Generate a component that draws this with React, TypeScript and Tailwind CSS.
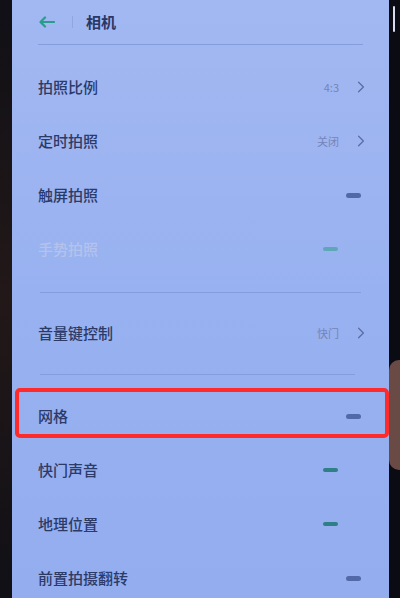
const FONT = { fontFamily: '"Noto Sans CJK SC", "Noto Sans", sans-serif' }

type Row = {
  label: string
  value?: string
  toggle?: 'off' | 'on'
  faded?: boolean
}

const GROUP_A: Row[] = [
  { label: '拍照比例', value: '4:3' },
  { label: '定时拍照', value: '关闭' },
  { label: '触屏拍照', toggle: 'off' },
  { label: '手势拍照', toggle: 'on', faded: true },
]

const GROUP_C: Row[] = [
  { label: '网格', toggle: 'off' },
  { label: '快门声音', toggle: 'on' },
  { label: '地理位置', toggle: 'on' },
  { label: '前置拍摄翻转', toggle: 'off' },
]

function Chevron() {
  return (
    <svg viewBox="0 0 10 16" className="w-[8px] h-[14px]" fill="none" stroke="#5b6da6" strokeWidth="1.6" strokeLinecap="round" strokeLinejoin="round">
      <path d="M2 2l6 6-6 6" />
    </svg>
  )
}

function Toggle({ state, faded }: { state: 'off' | 'on'; faded?: boolean }) {
  if (state === 'on') {
    return (
      <div className="w-[42px] flex justify-start">
        <div className={`w-[15px] h-[4px] rounded-full ${faded ? 'bg-[#5fa7b8]' : 'bg-[#2f7f86]'}`} />
      </div>
    )
  }
  return (
    <div className="w-[42px] flex justify-end pr-[4px]">
      <div className="w-[15px] h-[5px] rounded-full bg-[#5269a8]" />
    </div>
  )
}

function SettingRow({ row }: { row: Row }) {
  return (
    <div className="h-[54px] flex items-center justify-between pl-[26px] pr-[24px]">
      <span className={`text-[15px] font-medium ${row.faded ? 'text-[#b4c2ec]' : 'text-[#2c3a68]'}`}>{row.label}</span>
      {row.value && (
        <div className="flex items-center gap-[18px]">
          <span className="text-[11px] text-[#7485b8]">{row.value}</span>
          <Chevron />
        </div>
      )}
      {row.toggle && <Toggle state={row.toggle} faded={row.faded} />}
    </div>
  )
}

export default function App() {
  return (
    <div className="w-[400px] h-[598px] overflow-hidden flex bg-[#0e0e16]" style={FONT}>
      {/* left bezel */}
      <div className="w-[12px] h-full bg-gradient-to-b from-[#101016] via-[#221818] to-[#101016]" />

      {/* screen */}
      <div className="relative flex-1 h-full bg-gradient-to-b from-[#a2b8f2] via-[#98b1f0] to-[#93adef] overflow-hidden">
        <div className="h-[44px] flex items-center pl-[27px]">
          <svg viewBox="0 0 16 12" className="w-[16px] h-[12px]" fill="none" stroke="#2b9b8c" strokeWidth="2.2" strokeLinecap="round" strokeLinejoin="round">
            <path d="M15 6H2M6 1.5L1.5 6 6 10.5" />
          </svg>
          <div className="ml-[17px] w-px h-[12px] bg-[#8ea6e2]" />
          <span className="ml-[13px] text-[15px] font-bold text-[#2a3766]">相机</span>
        </div>
        <div className="mx-[26px] h-px bg-[#859dda]" />

        <div className="h-[15px]" />
        {GROUP_A.map(r => <SettingRow key={r.label} row={r} />)}

        <div className="h-[16px]" />
        <div className="mx-[28px] h-px bg-[#859dda]" />
        <div className="h-[13px]" />
        <SettingRow row={{ label: '音量键控制', value: '快门' }} />

        <div className="h-[14px]" />
        <div className="ml-[28px] mr-[34px] h-px bg-[#859dda]" />
        <div className="h-[14px]" />
        {GROUP_C.map(r => <SettingRow key={r.label} row={r} />)}

        {/* red annotation box */}
        <div className="absolute left-[3px] top-[388px] w-[374px] h-[50px] border-[4px] border-[#ff2a2a] rounded-[5px]" />
      </div>

      {/* right bezel */}
      <div className="relative w-[11px] h-full bg-[#0b0b14]">
        <div className="absolute left-[4px] top-[6px] w-[2px] h-[26px] rounded-full bg-[#d8dcef]" />
        <div className="absolute left-0 top-[360px] w-[11px] h-[110px] rounded-l-[10px] bg-[#6a4a45]" />
      </div>
    </div>
  )
}
